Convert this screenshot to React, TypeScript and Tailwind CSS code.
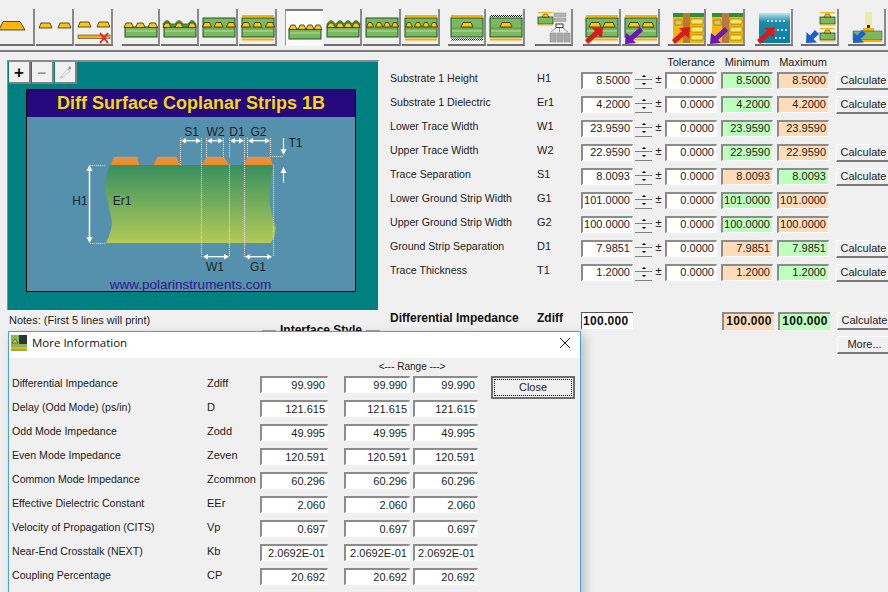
import React from 'react';

const YEL = '#fcc60e';
const EDGE = '#14532d';

function Tr({ x, w = 9, y = 14, h = 4.5 }: { x: number; w?: number; y?: number; h?: number }) {
  return <polygon points={`${x},${y + h} ${x + 2},${y} ${x + w - 2},${y} ${x + w},${y + h}`} fill={YEL} stroke="#2c2c10" strokeWidth="0.8" />;
}

function Core({ y = 18, full = false }: { y?: number; full?: boolean }) {
  const top = full ? 9 : y;
  return (
    <g>
      <rect x="3" y={top} width="32" height={28 - top} fill="#7cb85f" stroke={EDGE} strokeWidth="1" />
      <rect x="4" y="21.5" width="30" height="1" fill="#b5dca4" />
      {full && <rect x="4" y="18.5" width="30" height="1" fill={EDGE} opacity="0.35" />}
    </g>
  );
}

function Planes({ top = 'yel', bot = 'yel' }: { top?: string; bot?: string }) {
  return (
    <g>
      <rect x="3" y="6" width="32" height="2" fill={top === 'yel' ? '#f9b000' : 'url(#chk)'} />
      <rect x="3" y="29.5" width="32" height="2" fill={bot === 'yel' ? '#f9b000' : 'url(#chk)'} />
    </g>
  );
}

function Arrow({ color, down = false, dx = 0 }: { color: string; down?: boolean; dx?: number }) {
  const d = 'M20 18 L9 19 L12 22 L2 31 L5 35 L15 26 L19 29 Z';
  return <path d={d} fill={color} transform={down ? `translate(${dx + 23} 53) rotate(180)` : `translate(${dx} 0)`} />;
}

const BLUE_ARROW = 'M5 34 L5.5 23 L9 26.5 L14 21 L18 25 L12.5 30 L16 33.5 Z';

const three = [2, 13.5, 26];
const four = [3, 12, 20, 28];

function Surface({ xs }: { xs: number[] }) {
  return (
    <g>
      <Core />
      {xs.map((x) => <Tr key={x} x={x} w={xs.length === 4 ? 8 : 9.5} />)}
    </g>
  );
}

function Coated({ xs }: { xs: number[] }) {
  let wave = 'M3 18';
  xs.forEach((x) => { wave += ` L${x} 15 Q${x + 4} 8 ${x + 8} 15`; });
  wave += ' L35 18 Z';
  return (
    <g>
      <Core />
      <path d={wave} fill="#5d9e2c" stroke={EDGE} strokeWidth="0.7" />
      {xs.map((x) => <Tr key={x} x={x} w={8} />)}
    </g>
  );
}

function Embedded({ xs }: { xs: number[] }) {
  return (
    <g>
      <Core full />
      {xs.map((x) => <Tr key={x} x={x + 0.5} w={xs.length === 4 ? 7 : 9} y={13.5} />)}
    </g>
  );
}

function Board({ color, down }: { color: string; down?: boolean }) {
  return (
    <g>
      <rect x="5" y="4" width="31" height="30" fill="#f6b50f" />
      <rect x="5" y="4" width="31" height="4" fill="#2f8f3b" />
      <rect x="15" y="4" width="7" height="30" fill="#b9793a" />
      <rect x="7" y="11" width="7" height="5" fill="#d8c95a" stroke="#7a5a00" strokeWidth="0.5" />
      <rect x="23" y="10" width="12" height="5" fill="#f7e66a" stroke="#7a5a00" strokeWidth="0.5" />
      <rect x="23" y="18" width="12" height="5" fill="#f7e66a" stroke="#7a5a00" strokeWidth="0.5" />
      <rect x="23" y="26" width="12" height="5" fill="#f7e66a" stroke="#7a5a00" strokeWidth="0.5" />
      <Arrow color={color} down={down} dx={down ? 0 : 2} />
    </g>
  );
}

function Mini({ y }: { y: number }) {
  return (
    <g transform={`translate(17 ${y})`}>
      <rect x="0" y="5" width="15" height="7" fill="#7cb85f" stroke={EDGE} strokeWidth="0.8" />
      <polygon points="4,5 6,2 9,2 11,5" fill={YEL} stroke="#2c2c10" strokeWidth="0.6" />
      <rect x="0" y="0" width="15" height="1" fill="#f9b000" />
      <rect x="0" y="12.5" width="15" height="1" fill="#f9b000" />
    </g>
  );
}

const icons: React.ReactNode[] = [
  <polygon key="a" points="2,21 6,12.5 23,12.5 28,21" fill="#fbb512" stroke="#2c2c10" strokeWidth="0.8" />,
  <g key="b"><Tr x={3} w={13} y={14} h={5} /><Tr x={22} w={13} y={14} h={5} /></g>,
  <g key="c">
    <Tr x={3} w={13} y={13} h={5} /><Tr x={22} w={13} y={13} h={5} />
    <rect x="3" y="26" width="32" height="3.5" fill="#f9b000" stroke="#222" strokeWidth="0.5" />
    <path d="M25 24 L33 34 M33 24 L25 34" stroke="#f01818" strokeWidth="1.8" />
  </g>,
  <Surface key="d" xs={three} />,
  <Coated key="e" xs={[2, 14, 27]} />,
  <Embedded key="f" xs={three} />,
  <g key="g"><Embedded xs={three} /><Planes /></g>,
  <Surface key="h" xs={four} />,
  <Coated key="i" xs={four} />,
  <Embedded key="j" xs={four} />,
  <g key="k"><Embedded xs={four} /><Planes /></g>,
  <g key="l"><Core full /><Tr x={13} w={12} y={13.5} /><Planes bot="chk" /></g>,
  <g key="m"><Core full /><Tr x={13} w={12} y={13.5} /><Planes top="chk" /></g>,
  <g key="n">
    <g transform="translate(-14 0)"><Mini y={3} /></g>
    <rect x="19" y="4" width="12" height="3.5" fill="#b4b4b4" stroke="#8c8c8c" strokeWidth="0.5" />
    <rect x="19" y="9" width="12" height="3.5" fill="#b4b4b4" stroke="#8c8c8c" strokeWidth="0.5" />
    <rect x="21" y="15" width="7" height="3.5" fill="#fff" stroke="#111" strokeWidth="0.8" />
    <path d="M24.5 18.5 V23 M21 19 L16 23 M28 19 L33 23" stroke="#555" strokeWidth="0.6" />
    <rect x="15" y="24" width="6" height="9" fill="#aaa" stroke="#888" strokeWidth="0.5" />
    <rect x="22" y="24" width="6" height="9" fill="#aaa" stroke="#888" strokeWidth="0.5" />
    <rect x="29" y="24" width="6" height="9" fill="#aaa" stroke="#888" strokeWidth="0.5" />
  </g>,
  <g key="o"><Core full /><Tr x={6} w={12} y={13.5} /><Tr x={20} w={12} y={13.5} /><Planes /><Arrow color="#d81a1a" /></g>,
  <g key="p"><Core full /><Tr x={6} w={12} y={13.5} /><Tr x={20} w={12} y={13.5} /><Planes /><Arrow color="#6a16b8" down /></g>,
  <Board key="q" color="#d81a1a" />,
  <Board key="r" color="#6a16b8" down />,
  <g key="s">
    <rect x="4" y="4" width="31" height="30" fill="url(#sea)" />
    {[13, 17, 21, 25, 29].map((x) => <circle key={x} cx={x} cy="12" r="1" fill="#dff6fa" />)}
    {[19, 23, 27, 31].map((x) => <circle key={x} cx={x} cy="21" r="1" fill="#dff6fa" />)}
    {[21, 25, 29].map((x) => <circle key={x} cx={x} cy="29" r="1" fill="#dff6fa" />)}
    <Arrow color="#d81a1a" />
  </g>,
  <g key="t">
    <g transform="translate(2 0)"><Mini y={3} /></g>
    <g transform="translate(2 0)"><Mini y={19} /></g>
    <path d={BLUE_ARROW} fill="#1d5fd0" />
  </g>,
  <g key="u">
    <rect x="17" y="3" width="7" height="13" fill="#efe7ae" />
    <path d="M19 16 h3 v5 h-3z" fill="#333" />
    <rect x="15" y="19" width="11" height="3" fill="#f9b000" />
    <rect x="5" y="22" width="29" height="9" fill="#7cb85f" stroke={EDGE} strokeWidth="0.5" />
    <rect x="5" y="31" width="29" height="2" fill="#f9b000" />
    <path d={BLUE_ARROW} fill="#1d5fd0" />
  </g>,
];

// where each toolbar group starts is given by the left margin of its first button
const groups = [
  { ml: 'ml-[-3px]', from: 0, to: 3 },
  { ml: 'ml-[9px]', from: 3, to: 7 },
  { ml: 'ml-[8px]', from: 7, to: 11 },
  { ml: 'ml-[8px]', from: 11, to: 13 },
  { ml: 'ml-[10px]', from: 13, to: 14 },
  { ml: 'ml-[10px]', from: 14, to: 16 },
  { ml: 'ml-[8px]', from: 16, to: 18 },
  { ml: 'ml-[10px]', from: 18, to: 19 },
  { ml: 'ml-[8px]', from: 19, to: 20 },
  { ml: 'ml-[9px]', from: 20, to: 21 },
];

function Toolbar() {
  return (
    <div className="h-[52px] pt-[9px] flex items-start bg-[#f0f0f0] border-b-2 border-b-[#7d7d7d]">
      {groups.map((g) => (
        <div key={g.from} className={`${g.ml} flex gap-px`}>
          {icons.slice(g.from, g.to).map((ic, i) => {
            const on = g.from + i === 7;
            return (
              <div
                key={i}
                className={on
                  ? 'w-[38px] h-[37px] bg-[#fbfbfb] border-t-2 border-l border-t-[#7d7d7d] border-l-[#9a9a9a] border-b border-b-[#f8f8f8]'
                  : 'w-[38px] h-[37px] bg-[#f0f0f0] border-r-2 border-b-2 border-r-[#8a8a8a] border-b-[#6f6f6f]'}
              >
                <svg viewBox="0 0 38 37" width="38" height="37" className="block">{ic}</svg>
              </div>
            );
          })}
        </div>
      ))}
    </div>
  );
}

function Dim({ x1, x2, y }: { x1: number; x2: number; y: number }) {
  return (
    <g stroke="#fff" fill="#fff">
      <line x1={x1 + 2} x2={x2 - 2} y1={y} y2={y} strokeWidth="1.3" />
      <polygon points={`${x1},${y} ${x1 + 5},${y - 2.8} ${x1 + 5},${y + 2.8}`} strokeWidth="0" />
      <polygon points={`${x2},${y} ${x2 - 5},${y - 2.8} ${x2 - 5},${y + 2.8}`} strokeWidth="0" />
    </g>
  );
}

function Dots({ d }: { d: string }) {
  return <path d={d} stroke="#fff" strokeWidth="1" strokeDasharray="1 1" fill="none" />;
}

function Lab({ x, y, children }: { x: number; y: number; children: string }) {
  return <text x={x} y={y} textAnchor="middle" fontSize="12" fill="#16242e" fontFamily="'Liberation Sans', sans-serif">{children}</text>;
}

function Drawing() {
  const pad = [
    [110.7, 114, 137.3, 139.3],
    [153.3, 157.5, 176.5, 180],
    [201.7, 206.7, 224, 229],
    [244, 247.3, 270, 273],
  ];
  return (
    <svg viewBox="27 117 328 174" width="328" height="174" className="block">
      <defs>
        <linearGradient id="sub" x1="0" y1="0" x2="0" y2="1">
          <stop offset="0" stopColor="#37905f" />
          <stop offset="1" stopColor="#b3ca58" />
        </linearGradient>
        <linearGradient id="cu" x1="0" y1="0" x2="0" y2="1">
          <stop offset="0" stopColor="#dd9350" />
          <stop offset="1" stopColor="#f28a1e" />
        </linearGradient>
      </defs>
      <path d="M110 165 H273 Q269 190 270 205 Q272 215 276 228 Q275 236 271 243 H106 Q112 230 112 222 Q110 210 105 192 Q104 180 110 165 Z" fill="url(#sub)" />
      {pad.map((p) => <polygon key={p[0]} points={`${p[0]},165 ${p[1]},156.7 ${p[2]},156.7 ${p[3]},165`} fill="url(#cu)" />)}
      <Dots d="M180.5 138 V165 M201.5 138 V257 M229.5 165 V257 M244.5 138 V257 M273.5 165 V257 M206.5 138 V157 M223.5 138 V157 M229.5 138 V157 M247.5 138 V157 M270.5 138 V157 M90 165.5 H105 M90 243.5 H105 M272 156.5 H283" />
      <Dim x1={181} x2={201} y={140.7} />
      <Dim x1={207} x2={223} y={140.7} />
      <Dim x1={230} x2={244} y={140.7} />
      <Dim x1={248} x2={270} y={140.7} />
      <Dim x1={203} x2={229} y={256.7} />
      <Dim x1={245} x2={272} y={256.7} />
      <g fill="#fff" stroke="#fff">
        <line x1="89.5" x2="89.5" y1="167" y2="241" strokeWidth="1.5" />
        <polygon points="89.5,165 86.5,171 92.5,171" strokeWidth="0" />
        <polygon points="89.5,243 86.5,237 92.5,237" strokeWidth="0" />
        <line x1="283.5" x2="283.5" y1="138" y2="152" strokeWidth="1.2" />
        <polygon points="283.5,155 280.5,149 286.5,149" strokeWidth="0" />
        <line x1="283.5" x2="283.5" y1="170" y2="183" strokeWidth="1.2" />
        <polygon points="283.5,167 280.5,173 286.5,173" strokeWidth="0" />
      </g>
      <Lab x={191.5} y={136}>S1</Lab>
      <Lab x={215.5} y={136}>W2</Lab>
      <Lab x={237} y={136}>D1</Lab>
      <Lab x={258.5} y={136}>G2</Lab>
      <Lab x={295.5} y={147}>T1</Lab>
      <Lab x={80} y={205}>H1</Lab>
      <Lab x={122} y={205}>Er1</Lab>
      <Lab x={215} y={271}>W1</Lab>
      <Lab x={258} y={271}>G1</Lab>
      <text x="190.5" y="288.5" textAnchor="middle" fontSize="13.5" fill="#2b1a8c" fontFamily="'Liberation Sans', sans-serif">www.polarinstruments.com</text>
    </svg>
  );
}

function ToolBtn({ children }: { children: React.ReactNode }) {
  return (
    <div className="w-[22px] h-[22px] flex items-center justify-center bg-[#f0f0f0] border-r-2 border-b-2 border-r-[#808080] border-b-[#808080]">
      {children}
    </div>
  );
}

function Panel() {
  return (
    <div className="ml-[7px] w-[372px] h-[250px] bg-[#008080] border-t-2 border-l border-r border-[#8a8a8a] border-r-[#f0f0f0] flex flex-col">
      <div className="flex gap-px pl-px h-[27px] items-start">
        <ToolBtn><span className="text-[17px] font-bold leading-none text-[#111]">+</span></ToolBtn>
        <ToolBtn><span className="text-[15px] font-bold leading-none text-[#999]">−</span></ToolBtn>
        <ToolBtn>
          <svg viewBox="0 0 16 16" width="16" height="16">
            <path d="M3 14 L11 5 L13 7 L5 14 Z" fill="#fff" stroke="#a8a8a8" strokeWidth="0.8" />
            <path d="M11 4 L13 2 L14 4 L13 6 Z" fill="#8f8f8f" />
          </svg>
        </ToolBtn>
      </div>
      <div className="ml-[18px] w-[330px] h-[203px] border border-black bg-[#5590ac] flex flex-col">
        <div className="h-[27px] bg-[#25087c] flex items-center justify-center text-[18px] font-bold text-[#f5d60f]">
          Diff Surface Coplanar Strips 1B
        </div>
        <Drawing />
      </div>
    </div>
  );
}

type Row = [string, string, string, boolean, boolean];

// label, symbol, value, min is green, has calculate
const rows: Row[] = [
  ['Substrate 1 Height', 'H1', '8.5000', true, true],
  ['Substrate 1 Dielectric', 'Er1', '4.2000', true, true],
  ['Lower Trace Width', 'W1', '23.9590', true, false],
  ['Upper Trace Width', 'W2', '22.9590', true, true],
  ['Trace Separation', 'S1', '8.0093', false, true],
  ['Lower Ground Strip Width', 'G1', '101.0000', true, false],
  ['Upper Ground Strip Width', 'G2', '100.0000', true, false],
  ['Ground Strip Separation', 'D1', '7.9851', false, true],
  ['Trace Thickness', 'T1', '1.2000', false, true],
];

const field = 'h-[17px] border-t-2 border-l-2 border-t-[#8c8c8c] border-l-[#8c8c8c] border-r border-b border-r-[#fbfbfb] border-b-[#fbfbfb] text-right pr-[2px] text-[#1c1c1c] overflow-hidden whitespace-nowrap';
const raised = 'bg-[#f0f0f0] border-t border-l border-t-white border-l-white border-r-2 border-b-2 border-r-[#8c8c8c] border-b-[#7a7a7a] flex items-center justify-center text-[#1c1c1c]';

function Spinner() {
  return (
    <div className="ml-[2px] w-[17px] h-[17px] shrink-0 flex flex-col">
      <div className="h-[8px] border-b border-b-[#808080] flex items-center justify-center">
        <span className="w-0 h-0 border-x-[2px] border-x-transparent border-b-[2px] border-b-black" />
      </div>
      <div className="h-[9px] border-b border-b-[#808080] flex items-center justify-center">
        <span className="w-0 h-0 border-x-[2px] border-x-transparent border-t-[2px] border-t-black" />
      </div>
    </div>
  );
}

function CalcBtn() {
  return <div className={`ml-[7px] w-[56px] h-[18px] shrink-0 ${raised}`}>Calculate</div>;
}

function Form() {
  return (
    <div className="flex-1 text-[11px] min-w-0 -mt-[4px]">
      <div className="h-[16px] flex items-start leading-[12px] text-[#1c1c1c]">
        <span className="ml-[278px] w-[50px] text-center">Tolerance</span>
        <span className="ml-[6px] w-[50px] text-center">Minimum</span>
        <span className="ml-[6px] w-[50px] text-center">Maximum</span>
      </div>
      {rows.map((r) => (
        <div key={r[1]} className="h-[24px] flex items-start">
          <span className="ml-[2px] w-[147px] shrink-0 text-[10.6px] leading-[12px] text-[#1c1c1c]">{r[0]}</span>
          <span className="w-[44px] shrink-0 leading-[12px] text-[#1c1c1c]">{r[1]}</span>
          <div className={`w-[52px] shrink-0 bg-white leading-[13px] ${field}`}>{r[2]}</div>
          <Spinner />
          <span className="w-[13px] shrink-0 text-center leading-[14px]">±</span>
          <div className={`w-[52px] shrink-0 bg-white leading-[13px] ${field}`}>0.0000</div>
          <div className={`ml-[4px] w-[52px] shrink-0 leading-[13px] ${r[3] ? 'bg-[#bdffbd]' : 'bg-[#ffdcb9]'} ${field}`}>{r[2]}</div>
          <div className={`ml-[4px] w-[52px] shrink-0 leading-[13px] ${r[3] ? 'bg-[#ffdcb9]' : 'bg-[#bdffbd]'} ${field}`}>{r[2]}</div>
          {r[4] && <CalcBtn />}
        </div>
      ))}
      <div className="mt-[24px] h-[24px] flex items-start">
        <span className="ml-[2px] w-[147px] shrink-0 font-bold text-[12px] leading-[12px] text-[#111]">Differential Impedance</span>
        <span className="w-[44px] shrink-0 font-bold text-[12px] leading-[12px] text-[#111]">Zdiff</span>
        <div className="w-[52px] h-[17px] shrink-0 bg-white border-t border-l border-[#555] font-bold text-[12px] tracking-[0.3px] pl-[1px] leading-[16px] text-[#111]">100.000</div>
        <div className="ml-[89px] w-[52px] h-[18px] shrink-0 bg-[#ffdcb9] border-t-2 border-l-2 border-[#8c8c8c] font-bold text-[12px] tracking-[0.3px] leading-[15px] text-[#111] text-center">100.000</div>
        <div className="ml-[4px] w-[52px] h-[18px] shrink-0 bg-[#bdffbd] border-t-2 border-l-2 border-[#8c8c8c] font-bold text-[12px] tracking-[0.3px] leading-[15px] text-[#111] text-center">100.000</div>
        <CalcBtn />
      </div>
      <div className="flex">
        <div className={`ml-[449px] w-[56px] h-[18px] shrink-0 ${raised}`}>More...</div>
      </div>
    </div>
  );
}

const info = [
  ['Differential Impedance', 'Zdiff', '99.990'],
  ['Delay (Odd Mode) (ps/in)', 'D', '121.615'],
  ['Odd Mode Impedance', 'Zodd', '49.995'],
  ['Even Mode Impedance', 'Zeven', '120.591'],
  ['Common Mode Impedance', 'Zcommon', '60.296'],
  ['Effective Dielectric Constant', 'EEr', '2.060'],
  ['Velocity of Propagation (CITS)', 'Vp', '0.697'],
  ['Near-End Crosstalk (NEXT)', 'Kb', '2.0692E-01'],
  ['Coupling Percentage', 'CP', '20.692'],
];

function MoreInfo() {
  return (
    <div className="absolute left-[8px] top-[331px] w-[573px] h-[270px] bg-[#f0f0f0] border border-[#4aa3cf] shadow-[4px_4px_10px_rgba(0,0,0,0.22)] text-[11px]">
      <div className="h-[26px] pb-[5px] bg-white flex items-center">
        <svg viewBox="0 0 16 16" width="16" height="16" className="ml-[2px]">
          <rect x="0" y="0" width="16" height="16" fill="#7cb85f" />
          <polygon points="1,8 4,4 7,8" fill={YEL} stroke="#3a2a00" strokeWidth="0.5" />
          <rect x="8" y="0" width="8" height="9" fill="#333" />
          <rect x="0" y="12" width="16" height="2" fill="#f9b000" />
        </svg>
        <span className="ml-[5px] text-[11.5px] text-[#111] font-['Open_Sans',sans-serif]">More Information</span>
        <svg viewBox="0 0 12 12" width="12" height="12" className="ml-auto mr-[9px]">
          <path d="M1 1 L11 11 M11 1 L1 11" stroke="#222" strokeWidth="1" />
        </svg>
      </div>
      <div className="h-[18px] pt-[2px]">
        <div className="ml-[363px] w-[80px] text-center text-[10px] leading-[14px] text-[#1c1c1c]">&lt;--- Range ---&gt;</div>
      </div>
      <div className="flex items-start">
        <div>
          {info.map((r) => (
            <div key={r[1]} className="h-[24px] flex items-start">
              <span className="ml-[3px] w-[195px] shrink-0 pt-px text-[10.6px] leading-[12px] text-[#1c1c1c]">{r[0]}</span>
              <span className="w-[53px] shrink-0 pt-px leading-[12px] text-[#1c1c1c]">{r[1]}</span>
              <div className={`w-[68px] shrink-0 bg-white leading-[14px] ${field}`}>{r[2]}</div>
              <div className={`ml-[16px] w-[66px] shrink-0 bg-white leading-[14px] ${field}`}>{r[2]}</div>
              <div className={`ml-[3px] w-[65px] shrink-0 bg-white leading-[14px] ${field}`}>{r[2]}</div>
            </div>
          ))}
        </div>
        <div className="ml-[13px] w-[84px] h-[23px] bg-[#f0f0f0] border-2 border-[#6e6e6e] p-[1px]">
          <div className="h-full border border-dotted border-black flex items-center justify-center text-[#1c1c1c]">Close</div>
        </div>
      </div>
    </div>
  );
}

export default function App() {
  return (
    <div className="relative w-[888px] h-[592px] overflow-hidden bg-[#f0f0f0] font-['Liberation_Sans',Arial,sans-serif]">
      <svg width="0" height="0" className="absolute">
        <defs>
          <pattern id="chk" width="2" height="2" patternUnits="userSpaceOnUse">
            <rect width="2" height="2" fill="#fff" />
            <rect width="1" height="1" fill="#111" />
            <rect x="1" y="1" width="1" height="1" fill="#111" />
          </pattern>
          <linearGradient id="sea" x1="0" y1="0" x2="0" y2="1">
            <stop offset="0" stopColor="#bfe6ee" />
            <stop offset="0.3" stopColor="#1d8ba6" />
            <stop offset="1" stopColor="#0a7f9e" />
          </linearGradient>
        </defs>
      </svg>
      <Toolbar />
      <div className="flex pt-[8px]">
        <div className="w-[388px] shrink-0">
          <Panel />
          <div className="pl-[9px] pt-[3px] h-[14px] text-[11px] leading-[14px] text-[#1c1c1c]">Notes: (First 5 lines will print)</div>
          <div className="ml-[262px] mt-[-1px] flex items-center gap-[4px] text-[12px] font-bold text-[#111]">
            <span className="w-[14px] h-px bg-[#a0a0a0]" />
            <span className="leading-[14px]">Interface Style</span>
            <span className="w-[14px] h-px bg-[#a0a0a0]" />
          </div>
        </div>
        <Form />
      </div>
      <MoreInfo />
    </div>
  );
}
